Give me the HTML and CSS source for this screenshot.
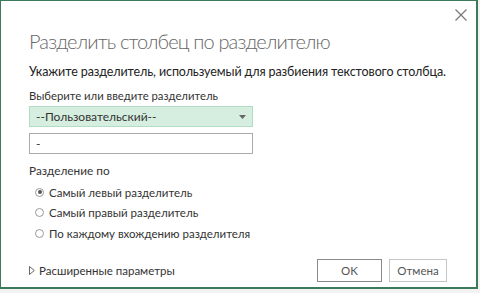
FILE: index.html
```html
<!DOCTYPE html>
<html lang="ru">
<head>
  <meta charset="UTF-8">
  <title>Разделить столбец по разделителю</title>
  <link rel="stylesheet" href="styles.css">
</head>
<body>

<div class="dialog">
  <button class="close" type="button" aria-label="Закрыть">
    <svg width="12" height="12" viewBox="0 0 12 12"><path d="M0.5 0.5L11.5 11.5M11.5 0.5L0.5 11.5" stroke="#777" stroke-width="1.2" fill="none"/></svg>
  </button>

  <h1>Разделить столбец по разделителю</h1>
  <p class="lead">Укажите разделитель, используемый для разбиения текстового столбца.</p>

  <label class="field-label">Выберите или введите разделитель</label>
  <div class="select">
    <span>--Пользовательский--</span>
    <svg width="7" height="4" viewBox="0 0 7 4"><path d="M0 0H7L3.5 4Z" fill="#666"/></svg>
  </div>
  <div class="input">-</div>

  <div class="group-label">Разделение по</div>
  <ul class="radios">
    <li><span class="radio checked"></span>Самый левый разделитель</li>
    <li><span class="radio"></span>Самый правый разделитель</li>
    <li><span class="radio"></span>По каждому вхождению разделителя</li>
  </ul>

  <div class="footer">
    <div class="advanced">
      <svg width="6" height="9" viewBox="0 0 6 9"><path d="M0.5 0.5L5.3 4.5L0.5 8.5Z" fill="none" stroke="#555" stroke-width="0.9"/></svg>
      Расширенные параметры
    </div>
    <div class="buttons">
      <button type="button" class="btn default">OK</button>
      <button type="button" class="btn">Отмена</button>
    </div>
  </div>
</div>

</body>
</html>
```

FILE: styles.css
```css
body {
  margin: 0;
  background: #f2f2f2;
  font-family: Lato, 'Noto Sans', sans-serif;
  color: #333;
}

.dialog {
  position: relative;
  width: 478px;
  height: 289px;
  background: white;
  border: 1px solid #3d7a5a;
  border-right-width: 2px;
  border-bottom-width: 2px;
  box-sizing: border-box;
  padding: 27px 0 0 28px;
}

.close {
  position: absolute;
  top: 8px;
  right: 9px;
  border: none;
  background: none;
  padding: 0;
  width: 12px;
  height: 12px;
}

.close svg {
  display: block;
}

h1 {
  margin: 0;
  font-size: 20px;
  font-weight: 300;
  letter-spacing: -0.85px;
  color: #666;
  line-height: 26px;
}

.lead {
  margin: 9px 0 0;
  font-size: 12.5px;
  letter-spacing: -0.1px;
  line-height: 17px;
  color: #222;
}

.field-label {
  display: block;
  margin-top: 8px;
  font-size: 11.3px;
  line-height: 16px;
  color: #333;
}

.select,
.input {
  width: 224px;
  height: 21px;
  box-sizing: border-box;
  font-size: 12px;
  line-height: 19px;
  padding: 0 6px;
}

.select {
  margin-top: 2px;
  background: #d5eedf;
  border: 1px solid #b3dcc4;
  display: flex;
  justify-content: space-between;
  align-items: center;
}

.input {
  margin-top: 6px;
  border: 1px solid #ababab;
}

.group-label {
  margin-top: 9px;
  font-size: 11.8px;
  line-height: 16px;
}

.radios {
  list-style: none;
  margin: 3px 0 0;
  padding: 0 0 0 6px;
}

.radios li {
  display: flex;
  align-items: center;
  height: 20.5px;
  font-size: 11.5px;
}

.radio {
  width: 9px;
  height: 9px;
  border: 1px solid #9a9a9a;
  border-radius: 50%;
  box-sizing: border-box;
  margin-right: 5px;
  position: relative;
}

.radio.checked::after {
  content: "";
  position: absolute;
  left: 1.5px;
  top: 1.5px;
  width: 4px;
  height: 4px;
  border-radius: 50%;
  background: #555;
}

.footer {
  margin-top: 15px;
  display: flex;
  align-items: center;
  justify-content: space-between;
  padding-right: 29px;
}

.advanced {
  display: flex;
  align-items: center;
  gap: 4px;
  font-size: 11.5px;
}

.buttons {
  display: flex;
  gap: 7px;
}

.btn {
  height: 23px;
  background: white;
  border: 1px solid #c6c6c6;
  font-family: Lato, 'Noto Sans', sans-serif;
  font-size: 11.5px;
  color: #555;
  padding: 0;
  width: 58px;
}

.btn.default {
  width: 65px;
  border-color: #8a8a8a;
}
```
